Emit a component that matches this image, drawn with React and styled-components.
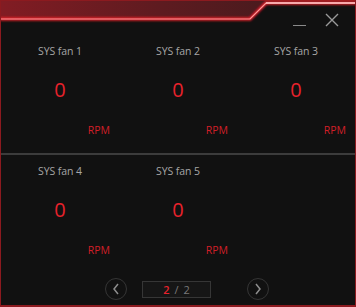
import React from 'react';
import styled, {createGlobalStyle} from 'styled-components';

const Global = createGlobalStyle`
  html, body { margin: 0; padding: 0; background: #111111; }
  * { box-sizing: border-box; }
`;

const fans = [
  {name: 'SYS fan 1', rpm: 0},
  {name: 'SYS fan 2', rpm: 0},
  {name: 'SYS fan 3', rpm: 0},
  {name: 'SYS fan 4', rpm: 0},
  {name: 'SYS fan 5', rpm: 0},
];

const Window = styled.div`
  width: 356px;
  height: 307px;
  background: #111111;
  border-left: 1px solid #8c1a1f;
  border-right: 1px solid #8c1a1f;
  border-bottom: 2px solid #8c1a1f;
  display: flex;
  flex-direction: column;
  font-family: "Open Sans", "Noto Sans", sans-serif;
  overflow: hidden;
`;

const TitleBar = styled.div`
  position: relative;
  height: 35px;
  margin: 0 -1px;
  display: flex;
  justify-content: flex-end;
  align-items: flex-start;
  padding: 13px 17px 0 0;
  gap: 18px;
`;

const Frame = styled.svg`
  position: absolute;
  left: 0;
  top: 0;
`;

const WinButton = styled.button`
  position: relative;
  width: 14px;
  height: 14px;
  padding: 0;
  border: 0;
  background: transparent;
  display: flex;
  align-items: center;
  justify-content: center;
`;

const Page = styled.div`
  display: grid;
  grid-template-columns: repeat(3, 1fr);
  grid-auto-rows: 118px;
`;

const Divider = styled.div`
  height: 2px;
  background: #3c3c3c;
`;

const Cell = styled.div`
  display: flex;
  flex-direction: column;
  align-items: center;
  padding-top: 9px;
`;

const Label = styled.div`
  font-size: 10.5px;
  line-height: 15px;
  letter-spacing: -0.1px;
  color: #a6a6a6;
`;

const Value = styled.div`
  font-size: 20px;
  line-height: 24px;
  margin-top: 19px;
  color: #e8222c;
`;

const Unit = styled.div`
  align-self: flex-end;
  margin: 21px 9px 0 0;
  font-size: 10.5px;
  line-height: 15px;
  color: #d11f28;
`;

const Pager = styled.div`
  flex: 1;
  display: flex;
  align-items: center;
  padding-left: 104px;
`;

const ArrowButton = styled.button`
  width: 22px;
  height: 22px;
  padding: 0;
  border-radius: 50%;
  border: 1px solid #353535;
  background: transparent;
  display: flex;
  align-items: center;
  justify-content: center;
  margin-right: ${p => p.$gap}px;
`;

const PageBox = styled.div`
  width: 69px;
  height: 17px;
  border: 1px solid #363636;
  background: #161616;
  margin-right: 36px;
  display: flex;
  align-items: center;
  justify-content: center;
  font-size: 11px;
  color: #7a7a7a;
  gap: 5px;
`;

const Current = styled.span`
  color: #e8222c;
  font-weight: 600;
`;

function Fan({name, rpm}) {
  return (
    <Cell>
      <Label>{name}</Label>
      <Value>{rpm}</Value>
      <Unit>RPM</Unit>
    </Cell>
  );
}

export default function App() {
  const rows = [fans.slice(0, 3), fans.slice(3)];
  return (
    <Window>
      <Global />
      <TitleBar>
        <Frame width="356" height="35" viewBox="0 0 356 35">
          <defs>
            <linearGradient id="hdr" x1="0" y1="0" x2="1" y2="0">
              <stop offset="0" stopColor="#821c23" />
              <stop offset="0.45" stopColor="#5e1b20" />
              <stop offset="1" stopColor="#3a1a1c" />
            </linearGradient>
            <filter id="glow" x="-5%" y="-50%" width="110%" height="200%">
              <feGaussianBlur stdDeviation="1.2" />
            </filter>
          </defs>
          <polygon points="0,0 356,0 356,3 266,3 250,19 0,19" fill="url(#hdr)" />
          <line x1="0" y1="0.5" x2="356" y2="0.5" stroke="#8c1a1f" />
          <polyline points="0,19 250,19 266,3 356,3" fill="none" stroke="#e0202a" strokeWidth="3.5" filter="url(#glow)" />
          <polyline points="0,19 250,19 266,3 356,3" fill="none" stroke="#ff9a9a" strokeWidth="1.2" />
          <line x1="266" y1="3" x2="356" y2="3" stroke="#ffc4c4" strokeWidth="1.6" />
        </Frame>
        <WinButton aria-label="minimize">
          <svg width="14" height="14" viewBox="0 0 14 14">
            <line x1="0" y1="12.5" x2="13" y2="12.5" stroke="#8a8a8a" strokeWidth="1" />
          </svg>
        </WinButton>
        <WinButton aria-label="close">
          <svg width="14" height="14" viewBox="0 0 14 14">
            <path d="M1 1 L13 13 M13 1 L1 13" stroke="#9a9a9a" strokeWidth="1.4" />
          </svg>
        </WinButton>
      </TitleBar>
      <Page>{rows[0].map(f => <Fan key={f.name} {...f} />)}</Page>
      <Divider />
      <Page>{rows[1].map(f => <Fan key={f.name} {...f} />)}</Page>
      <Pager>
        <ArrowButton $gap={15} aria-label="previous">
          <svg width="8" height="12" viewBox="0 0 8 12">
            <path d="M6 1 L2 6 L6 11" fill="none" stroke="#8e8e8e" strokeWidth="1.5" />
          </svg>
        </ArrowButton>
        <PageBox>
          <Current>2</Current>
          <span>/</span>
          <span>2</span>
        </PageBox>
        <ArrowButton $gap={0} aria-label="next">
          <svg width="8" height="12" viewBox="0 0 8 12">
            <path d="M2 1 L6 6 L2 11" fill="none" stroke="#8e8e8e" strokeWidth="1.5" />
          </svg>
        </ArrowButton>
      </Pager>
    </Window>
  );
}
